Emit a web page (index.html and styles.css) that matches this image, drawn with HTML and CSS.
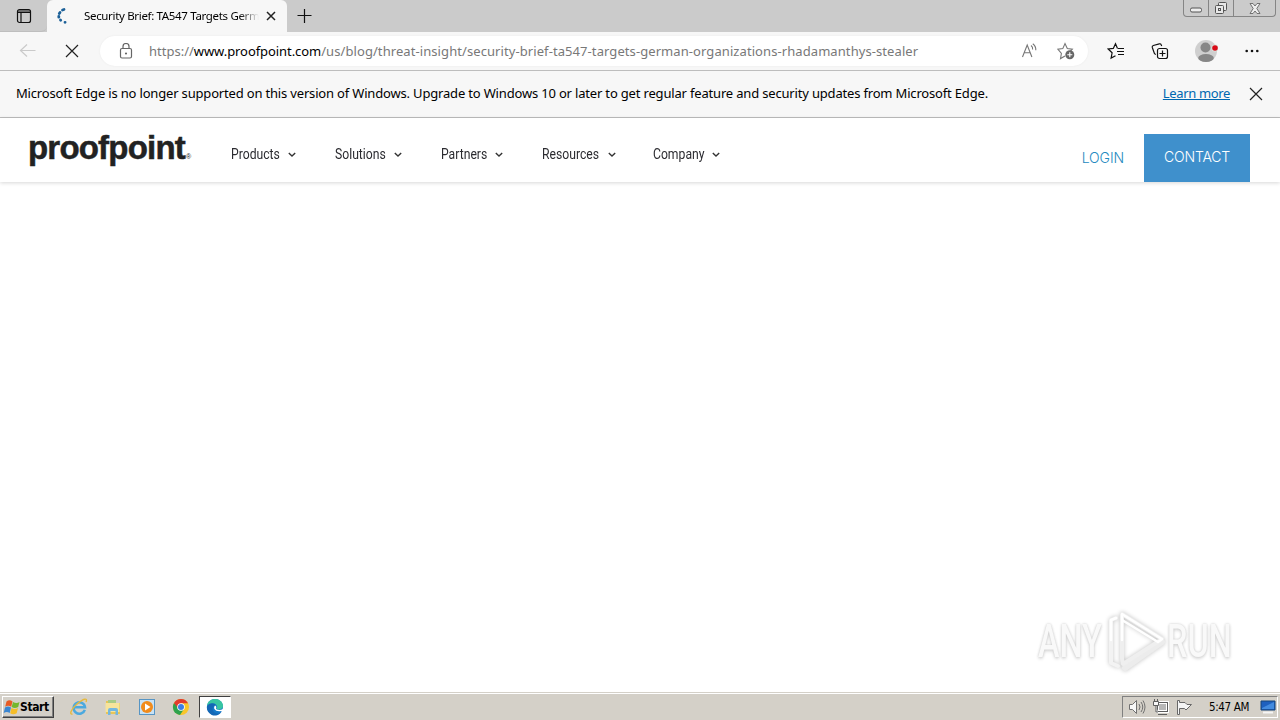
FILE: index.html
```
<!DOCTYPE html>
<html lang="en">
  <head>
    <meta charset="utf-8">
    <title>Security Brief: TA547 Targets German Organizations</title>
    <link rel="stylesheet" href="styles.css">
  </head>

  <body>
    <!-- Tab strip -->
    <div class="tab-strip">
      <div class="tab-actions">
        <svg width="16" height="16" viewBox="0 0 16 16" fill="none" stroke="#111" stroke-width="1.200"><rect x="1.500" y="1.500" width="13" height="13" rx="2"/><path d="M2 3h12M2 4.500h12M5 5v9"/></svg>
      </div>
      <div class="tab">
        <svg class="spinner" width="16" height="18" viewBox="0 0 16 18" fill="none" stroke="#1c6098" stroke-width="2.800" stroke-linecap="round"><path d="M6.500 3l1.500-.5M3.300 6.500l.7-1M2.800 9.300v.9M4.500 13l.2.200M9 15.300h.1"/></svg>
        <span class="tab-title">Security Brief: TA547 Targets Germ</span>
        <svg class="tab-close" width="10" height="10" viewBox="0 0 10 10" stroke="#222" stroke-width="1.500"><path d="M1 1l8 8M9 1l-8 8"/></svg>
      </div>
      <svg class="new-tab" width="16" height="16" viewBox="0 0 16 16" stroke="#111" stroke-width="1.200"><path d="M7.500 1v14M.5 7.500h14"/></svg>
      <div class="window-buttons">
        <div class="win-min"><svg width="12" height="6" viewBox="0 0 12 6"><rect x=".5" y="1" width="11" height="4" rx="1.500" fill="#eee" stroke="#555"/></svg></div>
        <div class="win-max"><svg width="14" height="14" viewBox="0 0 14 14" fill="#e8e8e8" stroke="#555"><rect x="4.500" y="1.500" width="8" height="8" rx="1"/><rect x="1.500" y="4.500" width="8" height="8" rx="1"/><rect x="4.500" y="7.500" width="2" height="2"/></svg></div>
        <div class="win-close"><svg width="12" height="11" viewBox="0 0 12 11"><path d="M1 .5h3l2 2.500L8 .5h3L7.800 5.500l3.200 5H8L6 8l-2 2.500H1l3.200-5z" fill="#eee" stroke="#666" stroke-width=".9"/></svg></div>
      </div>
    </div>

    <!-- Toolbar -->
    <div class="toolbar">
      <svg class="back" width="18" height="14" viewBox="0 0 18 14" fill="none" stroke="#cacaca" stroke-width="1.200"><path d="M16.500 6.500H1.500M8 .5L1.500 6.500 8 12.500"/></svg>
      <svg class="stop" width="14" height="14" viewBox="0 0 14 14" stroke="#222" stroke-width="1.200"><path d="M1 1l12 12M13 1L1 13"/></svg>
      <div class="address-bar">
        <svg class="lock" width="14" height="17" viewBox="0 0 14 17" fill="none" stroke="#666" stroke-width="1.200"><rect x="1.500" y="5.500" width="11" height="9.500" rx="1.500"/><path d="M4 5.500V3.500a3 3 0 0 1 6 0v2"/><circle cx="7" cy="10.500" r=".5" fill="#666"/></svg>
        <div class="url"><span class="scheme">https://</span><span class="domain">www.proofpoint.com</span><span class="path">/us/blog/threat-insight/security-brief-ta547-targets-german-organizations-rhadamanthys-stealer</span></div>
        <svg class="read-aloud" width="17" height="16" viewBox="0 0 17 16" fill="none" stroke="#777" stroke-width="1.100"><path d="M1.500 14L6.200 2l4.700 12M3 9.800h6.300M10 2.500a4 4 0 0 1 1.600 4M11.800.8a7.500 7.500 0 0 1 3 6.500"/></svg>
        <svg class="add-favorite" width="19" height="18" viewBox="0 0 19 18" fill="none" stroke="#777" stroke-width="1.100"><path d="M8 14l-4.500 2.600.9-5.300L.8 7.200l5-.6L8 1.600l2.300 5 5 .6-1.800 1.800"/><circle cx="12.800" cy="12.800" r="4.500" fill="#666" stroke="none"/><path d="M12.800 10.300v5M10.300 12.800h5" stroke="#fff"/></svg>
      </div>
      <svg class="favorites" width="18" height="18" viewBox="0 0 18 18" fill="none" stroke="#111" stroke-width="1.200"><path d="M10.500 6.500L8.500 1.700 6.300 6.400 1.200 7l3.900 3.800-1 5.300 4.400-2.300M11 6.500h6M10 9.500h7M11 12.500h6"/></svg>
      <svg class="collections" width="18" height="18" viewBox="0 0 18 18" fill="none" stroke="#111" stroke-width="1.200"><path d="M4.800 12.500L3.500 11.700 1.300 5.500c-.3-1 .2-1.700 1-2l6-1.700c.9-.2 1.600.2 1.900 1l.5 1.200"/><rect x="6.500" y="6.500" width="10" height="10" rx="2"/><path d="M11.500 8.500v6M8.500 11.500h6"/></svg>
      <svg class="profile" width="24" height="24" viewBox="0 0 24 24"><circle cx="12" cy="12" r="11" fill="#cfcfcf"/><circle cx="11.500" cy="8.500" r="5" fill="#878787"/><ellipse cx="12" cy="19" rx="7.800" ry="4" fill="#878787"/><circle cx="21" cy="9" r="3.500" fill="#dde8e0"/><circle cx="21" cy="9" r="2.800" fill="#d90b18"/></svg>
      <svg class="more" width="14" height="4" viewBox="0 0 14 4" fill="#111"><circle cx="1.700" cy="2" r="1.300"/><circle cx="7" cy="2" r="1.300"/><circle cx="12.300" cy="2" r="1.300"/></svg>
    </div>

    <!-- Unsupported system notice -->
    <div class="notice">
      <span class="notice-text">Microsoft Edge is no longer supported on this version of Windows. Upgrade to Windows 10 or later to get regular feature and security updates from Microsoft Edge.</span>
      <a class="notice-link" href="#">Learn more</a>
      <svg width="14" height="14" viewBox="0 0 14 14" stroke="#222" stroke-width="1.200"><path d="M1 1l12 12M13 1L1 13"/></svg>
    </div>

    <!-- Page -->
    <header class="site-header">
      <div class="logo"><span class="logo-text">proofpoint</span><span class="logo-dot">®</span></div>
      <nav class="site-nav">
        <a class="products" href="#"><span>Products</span><svg width="8" height="6" viewBox="0 0 8 6"><path d="M.8 1l3.200 3 3.200-3"/></svg></a>
        <a class="solutions" href="#"><span>Solutions</span><svg width="8" height="6" viewBox="0 0 8 6"><path d="M.8 1l3.200 3 3.200-3"/></svg></a>
        <a class="partners" href="#"><span>Partners</span><svg width="8" height="6" viewBox="0 0 8 6"><path d="M.8 1l3.200 3 3.200-3"/></svg></a>
        <a class="resources" href="#"><span>Resources</span><svg width="8" height="6" viewBox="0 0 8 6"><path d="M.8 1l3.200 3 3.200-3"/></svg></a>
        <a class="company" href="#"><span>Company</span><svg width="8" height="6" viewBox="0 0 8 6"><path d="M.8 1l3.200 3 3.200-3"/></svg></a>
      </nav>
      <a class="login" href="#">LOGIN</a>
      <a class="contact" href="#">CONTACT</a>
    </header>
    <main class="page">
      <div class="watermark">
        <span>ANY</span>
        <svg width="60" height="66" viewBox="0 0 60 66" fill="none" stroke-linejoin="round" stroke-linecap="round"><path d="M11 10L6 12v43l7 3" stroke="#f3f3f3" stroke-width="4"/><path d="M20 60L57 34" stroke="#ececec" stroke-width="6"/><path d="M17 51V6l40 25-39 25z" stroke="#efefef" stroke-width="4"/><path d="M11 10L6 12v20M17 32V6l40 25-4 3-36-22" stroke="#fff" stroke-width="2.500"/></svg>
        <span>RUN</span>
      </div>
    </main>

    <!-- Taskbar -->
    <footer class="taskbar">
      <div class="start">
        <svg width="17" height="17" viewBox="0 0 17 17"><path d="M3.500 2.500q3-2.500 6 0L8.200 7.800q-3-2-6 0z" fill="#e85b24"/><path d="M10 3q3.500 2 6.500 0l-1.300 5q-3.500 2-6.500 0z" fill="#75b72d"/><path d="M2 8.500q3-2 6 0L6.700 14q-3-2-6 0z" fill="#3b86d1"/><path d="M8.500 9q3.500 2 6.500 0l-1.300 5.300q-3.500 2-6.500 0z" fill="#f5bd27"/></svg>
        <span>Start</span>
      </div>
      <div class="quick-launch">
        <svg width="18" height="18" viewBox="0 0 18 18" fill="none"><path d="M14.800 11.800A5.700 5.700 0 1 1 15 9.300H5" stroke="#4ba9df" stroke-width="2.500"/><path d="M2.500 16C-1 17 1 11 7 6S18-1 16 4" stroke="#e6b93d" stroke-width="1.400"/></svg>
        <svg width="18" height="18" viewBox="0 0 18 18"><path d="M2 3h5l1 2h8v11H2z" fill="#e8c557"/><path d="M4 2h8v4H4z" fill="#a8cc86"/><path d="M1.500 5h14v9h-14z" fill="#f7e49b"/><path d="M4 17v-5q0-2 2-2h6q2 0 2 2v5h-2.500v-4h-5v4z" fill="#73b7df"/></svg>
        <svg width="18" height="18" viewBox="0 0 18 18"><rect x="1.500" y="1.500" width="15" height="15" fill="#c8e2f5" stroke="#5795c4"/><circle cx="9" cy="9" r="6" fill="#f18b1b"/><path d="M7 5.500l5.500 3.500L7 12.500z" fill="#fff"/></svg>
        <svg width="18" height="18" viewBox="0 0 18 18"><circle cx="9" cy="9" r="8" fill="#f9c62a"/><path d="M9 9L2 5a8 8 0 0 0 6 12l4-6z" fill="#2ea24d"/><path d="M2 5a8 8 0 0 1 14 .2H9L6 10z" fill="#e23b2e"/><circle cx="9" cy="9" r="3.800" fill="#fff"/><circle cx="9" cy="9" r="3" fill="#3d7ee6"/></svg>
      </div>
      <div class="task-active">
        <svg width="18" height="18" viewBox="0 0 18 18"><circle cx="9" cy="9" r="8" fill="#1478c8"/><path d="M1 8C2-1 15-1 17 7c.6 4-3.500 5.500-6.500 4 2-3-1-6-4-5.500C4 5.700 2 7 1 8z" fill="#38c5a2"/><path d="M1 8c3-4 8-3 9-.5-3 0-4 3-3 5 2 4 6 3.500 8.500 1.500A8 8 0 0 1 1 8z" fill="#1467b5"/><path d="M9 7.500c-2.500 3 .5 6.500 6 5.500h2v-2c-3 1.500-7 1-7-.8.8-1 .2-2-1-2.700z" fill="#fff"/></svg>
      </div>
      <div class="tray">
        <svg width="18" height="16" viewBox="0 0 18 16" fill="none" stroke="#707070"><path d="M1.500 5.500h3l4-4v13l-4-4h-3z" fill="#f7f7f7"/><path d="M11 5q2 3 0 6M13 3q3.500 5 0 10M15 1.500q4 6.500 0 13"/></svg>
        <svg width="18" height="17" viewBox="0 0 18 17" fill="none" stroke="#5e5e5e"><rect x="5.500" y="3.500" width="10" height="9" fill="#b7b7b7" stroke="#fff" stroke-width="3"/><rect x="5.500" y="3.500" width="10" height="9"/><path d="M6 15.500h9M1.500 2.500h5v4h-5zM2.500 0v2M5.500 0v2M4 7v6h2" fill="#f8f8f8"/></svg>
        <svg width="18" height="17" viewBox="0 0 18 17" fill="#f5f5f5" stroke="#686868"><path d="M1.500 1.500v14h2V9.500h5l1.500 1.500 5.500-5.500h-4.500l-2-2h-5.500v-2z"/></svg>
        <span class="clock">5:47 AM</span>
        <svg class="desktop-icon" width="16" height="14" viewBox="0 0 16 14"><path d="M1 1h14v9H1z" fill="#1e60bf" stroke="#164479"/><path d="M2 8l12-6v7H2z" fill="#438bdf"/><path d="M3 12.500h10" stroke="#f5f5f5" stroke-width="2"/></svg>
      </div>
    </footer>
  </body>
</html>
```
FILE: styles.css
```
* {
  box-sizing: border-box;
}

body {
  margin: 0;
  width: 1280px;
  height: 720px;
  overflow: hidden;
  display: flex;
  flex-direction: column;
  background: #fff;
  color: #000;
  font-family: "Noto Sans", "Open Sans", sans-serif;
}

svg {
  display: block;
  flex: none;
}

a {
  color: inherit;
  text-decoration: none;
}

/* browser chrome */
.tab-strip {
  height: 32px;
  flex: none;
  display: flex;
  background: #cbcbcb;
}

.tab-actions {
  width: 47px;
  padding: 8px 0 0 16px;
  border-bottom: 1px solid #bebebe;
  border-bottom-right-radius: 6px;
}

.tab {
  width: 240px;
  display: flex;
  align-items: center;
  padding-left: 9px;
  background: #f7f7f7;
  border-radius: 6px 6px 0 0;
}

.tab-title {
  width: 175px;
  margin-left: 12px;
  padding-bottom: 1px;
  white-space: nowrap;
  font-size: 11.5px;
  letter-spacing: -0.33px;
  -webkit-mask-image: linear-gradient(90deg, #000 155px, transparent);
  mask-image: linear-gradient(90deg, #000 155px, transparent);
}

.tab-close {
  margin-left: 7px;
}

.new-tab {
  margin: 8px 0 0 10px;
}

.window-buttons {
  display: flex;
  height: 17px;
  width: 93px;
  margin: 0 4px 0 auto;
  border: 1px solid #858585;
  border-top: 0;
  border-radius: 0 0 4px 4px;
}

.window-buttons div {
  display: flex;
  justify-content: center;
  align-items: center;
  border-right: 1px solid #858585;
}

.window-buttons .win-min {
  width: 25px;
  padding-top: 4px;
}

.window-buttons .win-max {
  width: 25px;
}

.window-buttons .win-close {
  flex: 1;
  border: 0;
}

.toolbar {
  height: 39px;
  flex: none;
  display: flex;
  align-items: center;
  padding-left: 19px;
  background: #f7f7f7;
  border-bottom: 1px solid #bdbdbd;
}

.stop {
  margin-left: 28px;
}

.address-bar {
  width: 988px;
  height: 30px;
  display: flex;
  align-items: center;
  margin-left: 21px;
  padding-left: 19px;
  background: #fff;
  border-radius: 15px;
  box-shadow: 0 0 2px #e8e8e8;
}

.url {
  width: 870px;
  margin-left: 16px;
  white-space: nowrap;
  font-size: 13px;
  color: #787878;
}

.url .domain {
  color: #000;
  letter-spacing: -0.07px;
}

.url .path {
  letter-spacing: 0.08px;
}

.read-aloud {
  margin-left: 2px;
}

.add-favorite {
  margin-left: 19px;
}

.favorites {
  margin-left: 19px;
}

.collections {
  margin-left: 26px;
}

.profile {
  margin-left: 25px;
}

.more {
  margin-left: 27px;
}

.notice {
  height: 47px;
  flex: none;
  display: flex;
  align-items: center;
  padding: 0 17px 0 16px;
  background: #f7f7f7;
  border-bottom: 1px solid #bdbdbd;
  font-size: 13px;
  line-height: 18px;
  white-space: nowrap;
}

.notice-text {
  padding-bottom: 2px;
  letter-spacing: -0.175px;
}

.notice-link {
  margin: 0 19px 0 auto;
  padding-bottom: 2px;
  color: #0067b0;
  letter-spacing: -0.35px;
  text-decoration: underline;
}

/* site */
.site-header {
  height: 64px;
  flex: none;
  display: flex;
  align-items: flex-start;
  padding-right: 30px;
  background: #fff;
  box-shadow: 0 1px 4px rgba(0, 0, 0, 0.16);
  z-index: 1;
}

.logo {
  width: 231px;
  height: 56px;
  flex: none;
  display: flex;
  align-items: baseline;
  padding: 8px 0 0 28px;
  color: #222;
}

.logo-text {
  font: bold 33px/44px "Liberation Sans", sans-serif;
  letter-spacing: -0.8px;
  -webkit-text-stroke: 0.5px #222;
}

.logo-dot {
  margin-left: 1px;
  font: 7px "Liberation Sans", sans-serif;
}

.site-nav {
  display: flex;
  padding-top: 26px;
  font: 14px/20px Roboto, sans-serif;
  color: #2b2b30;
}

.site-nav a {
  display: flex;
  align-items: center;
}

.site-nav span {
  flex: 1;
  transform: scaleX(0.87);
  transform-origin: left;
}

.site-nav svg {
  margin-top: 2px;
  fill: none;
  stroke: #333;
  stroke-width: 1.4;
}

.products {
  width: 65px;
  margin-right: 39px;
}

.solutions {
  width: 67px;
  margin-right: 39px;
}

.partners {
  width: 62px;
  margin-right: 39px;
}

.resources {
  width: 72px;
  margin-right: 39px;
}

.company {
  width: 67px;
}

.login {
  margin: 29px 20px 0 auto;
  font: 300 14px/22px Inter, sans-serif;
  letter-spacing: -0.1px;
  color: #2389c0;
}

.contact {
  width: 106px;
  height: 48px;
  margin-top: 16px;
  background: #3f90cc;
  color: #fff;
  font: 300 14px/46px Inter, sans-serif;
  letter-spacing: -0.2px;
  text-align: center;
}

.page {
  flex: 1;
  display: flex;
  justify-content: flex-end;
  align-items: flex-end;
  padding: 0 48px 18px 0;
}

.watermark {
  display: flex;
  align-items: center;
  justify-content: space-between;
  width: 194px;
  height: 66px;
  color: #f9f9f9;
  font: 500 47px/60px Roboto, sans-serif;
  text-shadow: 0 0 3px #c8c8c8, 0 2px 4px #ddd;
}

.watermark span {
  width: 65px;
  transform: scaleX(0.69);
  transform-origin: left;
}

.watermark svg {
  filter: drop-shadow(0 0 2px #c2c2c2);
}

/* taskbar */
.taskbar {
  height: 28px;
  flex: none;
  display: flex;
  align-items: center;
  padding: 1px 2px 0;
  background: #d4d0c8;
  border-top: 1px solid #d4d0c8;
  box-shadow: inset 0 1px #fff;
}

.start {
  width: 52px;
  height: 22px;
  display: flex;
  align-items: center;
  border: 1px solid;
  border-color: #fff #404040 #404040 #fff;
  box-shadow: inset -1px -1px #808080;
  font: bold 12px "DejaVu Sans Condensed", "DejaVu Sans", sans-serif;
  letter-spacing: -0.4px;
}

.quick-launch {
  display: flex;
  gap: 16px;
  margin-left: 16px;
}

.task-active {
  width: 32px;
  height: 22px;
  display: flex;
  align-items: center;
  justify-content: center;
  margin-left: 9px;
  background: #fff;
  border: 1px solid;
  border-color: #404040 #fff #fff #404040;
}

.tray {
  width: 156px;
  height: 22px;
  display: flex;
  align-items: center;
  gap: 6px;
  margin-left: auto;
  padding-left: 5px;
  border: 1px solid;
  border-color: #808080 #fff #fff #808080;
}

.clock {
  width: 45px;
  margin-left: 9px;
  white-space: nowrap;
  font: 11.5px "DejaVu Sans Condensed", "DejaVu Sans", sans-serif;
  letter-spacing: -0.35px;
}
```
